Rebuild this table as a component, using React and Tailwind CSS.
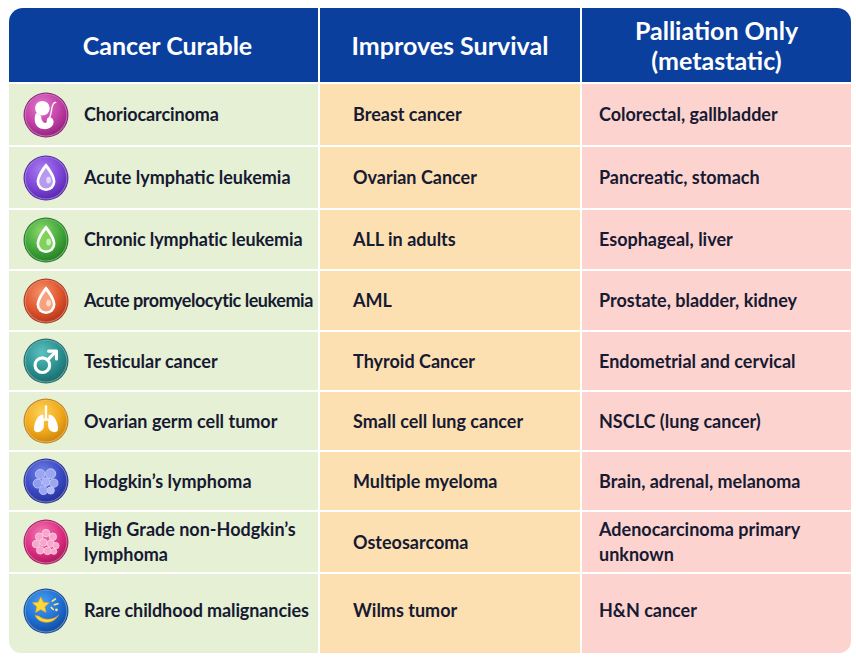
import React from "react";

const FONT = { fontFamily: "Lato, 'Open Sans', sans-serif" };

function Badge({ id, light, mid, dark, children }) {
  return (
    <svg width="46" height="46" viewBox="0 0 44 44" className="shrink-0 w-[46px] h-[46px]">
      <defs>
        <radialGradient id={id} cx="40%" cy="30%" r="75%">
          <stop offset="0%" stopColor={light} />
          <stop offset="60%" stopColor={mid} />
          <stop offset="100%" stopColor={dark} />
        </radialGradient>
      </defs>
      <circle cx="22" cy="22" r="21.5" fill={dark} />
      <circle cx="22" cy="22" r="20" fill={`url(#${id})`} />
      <circle cx="22" cy="22" r="20" fill="none" stroke="#ffffff" strokeOpacity="0.35" strokeWidth="1" />
      {children}
    </svg>
  );
}

function Drop({ inner }) {
  return (
    <g>
      <path d="M22 8 C22 8 13 18.5 13 25.5 A9 9 0 0 0 31 25.5 C31 18.5 22 8 22 8 Z" fill="#ffffff" />
      <path d="M22 12.5 C22 12.5 15.5 20.5 15.5 25.5 A6.5 6.5 0 0 0 28.5 25.5 C28.5 20.5 22 12.5 22 12.5 Z" fill={inner} />
      <ellipse cx="24.5" cy="24" rx="2.3" ry="3.2" fill="#ffffff" opacity="0.6" />
    </g>
  );
}

const icons = [
  <Badge key="1" id="g1" light="#e27ccc" mid="#c23fa6" dark="#8e1f7a">
    <circle cx="18.5" cy="15.5" r="7" fill="#fff" />
    <path d="M12.5 20 C9.5 26 11.5 35 19.5 35.5 C25.5 36 30.5 32 29 27 C28 24 25 23.5 23.5 25 C22 26.5 23.5 28.5 22 29.5 C20 30.5 17 27 17.5 23 Z" fill="#fff" />
    <path d="M24 26 C27.5 24 26.5 17 28.5 12.5 C29.5 10 31 9.5 31.5 10.5" stroke="#fff" strokeWidth="1.3" fill="none" />
  </Badge>,
  <Badge key="2" id="g2" light="#a97ef0" mid="#7d45d8" dark="#5526a8">
    <Drop inner="#b79af0" />
  </Badge>,
  <Badge key="3" id="g3" light="#8fd86c" mid="#42a83a" dark="#237a22">
    <Drop inner="#7fd25a" />
  </Badge>,
  <Badge key="4" id="g4" light="#f5946a" mid="#e0552e" dark="#b0331a">
    <Drop inner="#f7a27d" />
  </Badge>,
  <Badge key="5" id="g5" light="#5cc0c0" mid="#2a9090" dark="#1b6868">
    <circle cx="18.5" cy="26" r="7" stroke="#fff" strokeWidth="3" fill="none" />
    <path d="M23.5 21 L31 13.5" stroke="#fff" strokeWidth="3" strokeLinecap="round" />
    <path d="M24.5 12.5 L32 12.5 L32 20" stroke="#fff" strokeWidth="3" fill="none" strokeLinecap="round" strokeLinejoin="round" />
  </Badge>,
  <Badge key="6" id="g6" light="#fcd25a" mid="#f1a91a" dark="#c8820c">
    <path d="M22 8 L22 21" stroke="#fff" strokeWidth="2.2" strokeLinecap="round" />
    <path d="M22 19 L19 22 M22 19 L25 22" stroke="#fff" strokeWidth="1.7" strokeLinecap="round" />
    <path d="M19.5 16 C14.5 15 10.5 23 10.5 29.5 C10.5 32.5 13 33.5 16.5 32 C18.5 31 20 29.5 20 26 Z" fill="#fff" />
    <path d="M24.5 16 C29.5 15 33.5 23 33.5 29.5 C33.5 32.5 31 33.5 27.5 32 C25.5 31 24 29.5 24 26 Z" fill="#fff" />
  </Badge>,
  <Badge key="7" id="g7" light="#6f80e8" mid="#3b4bc4" dark="#262f94">
    <circle cx="16.5" cy="15.5" r="4.6" fill="#9aa6f2" stroke="#c5ccfa" strokeWidth="0.8" />
    <circle cx="26.5" cy="15" r="4.8" fill="#9aa6f2" stroke="#c5ccfa" strokeWidth="0.8" />
    <circle cx="14" cy="24.5" r="4.3" fill="#8f9cf0" stroke="#c5ccfa" strokeWidth="0.8" />
    <circle cx="22" cy="23" r="4" fill="#a7b1f5" stroke="#c5ccfa" strokeWidth="0.8" />
    <circle cx="29.5" cy="24" r="3.9" fill="#9aa6f2" stroke="#c5ccfa" strokeWidth="0.8" />
    <circle cx="19.5" cy="31" r="4" fill="#9aa6f2" stroke="#c5ccfa" strokeWidth="0.8" />
    <circle cx="26.5" cy="31" r="3.5" fill="#b3bcf7" stroke="#c5ccfa" strokeWidth="0.8" />
  </Badge>,
  <Badge key="8" id="g8" light="#f27ab4" mid="#de2f83" dark="#a8185c">
    <circle cx="22" cy="13.5" r="3.6" fill="#f7a6cc" stroke="#fcd0e4" strokeWidth="0.8" />
    <circle cx="15.5" cy="17" r="3.6" fill="#f7a6cc" stroke="#fcd0e4" strokeWidth="0.8" />
    <circle cx="28.5" cy="17" r="3.6" fill="#f7a6cc" stroke="#fcd0e4" strokeWidth="0.8" />
    <circle cx="12.5" cy="24" r="3.6" fill="#f7a6cc" stroke="#fcd0e4" strokeWidth="0.8" />
    <circle cx="19.5" cy="22.5" r="3.6" fill="#f7a6cc" stroke="#fcd0e4" strokeWidth="0.8" />
    <circle cx="26.5" cy="23.5" r="3.6" fill="#f7a6cc" stroke="#fcd0e4" strokeWidth="0.8" />
    <circle cx="31.5" cy="25.5" r="3" fill="#f7a6cc" stroke="#fcd0e4" strokeWidth="0.8" />
    <circle cx="16.5" cy="30" r="3.6" fill="#f7a6cc" stroke="#fcd0e4" strokeWidth="0.8" />
    <circle cx="23.5" cy="30.5" r="3.6" fill="#f7a6cc" stroke="#fcd0e4" strokeWidth="0.8" />
    <circle cx="29.5" cy="31" r="2.8" fill="#f7a6cc" stroke="#fcd0e4" strokeWidth="0.8" />
  </Badge>,
  <Badge key="9" id="g9" light="#4aa0f0" mid="#1e6fd4" dark="#12489a">
    <path d="M17 8.5 L19.4 13.6 L25 14.2 L20.8 17.9 L22 23.4 L17 20.5 L12 23.4 L13.2 17.9 L9 14.2 L14.6 13.6 Z" fill="#ffd83a" stroke="#f0a818" strokeWidth="0.6" />
    <path d="M11.5 26 C14.5 34 28 36 34 26 C29.5 30.5 20 31.5 15.5 27 Z" fill="#ffd83a" stroke="#e6a010" strokeWidth="0.6" />
    <path d="M28 12.5 L31 10.5 M30 16 L33.5 15 M27 18.5 L29 20.5" stroke="#ffe680" strokeWidth="1.5" strokeLinecap="round" />
    <circle cx="32" cy="21" r="1.3" fill="#ffe680" />
  </Badge>,
];

const rows = [
  ["Choriocarcinoma", "Breast cancer", "Colorectal, gallbladder", "h-[61px]", "tracking-[-0.1px]"],
  ["Acute lymphatic leukemia", "Ovarian Cancer", "Pancreatic, stomach", "h-[61px]", "tracking-[0px]"],
  ["Chronic lymphatic leukemia", "ALL in adults", "Esophageal, liver", "h-[59px]", "tracking-[-0.1px]"],
  ["Acute promyelocytic leukemia", "AML", "Prostate, bladder, kidney", "h-[59px]", "tracking-[-0.45px]"],
  ["Testicular cancer", "Thyroid Cancer", "Endometrial and cervical", "h-[58px]", "tracking-[0px]"],
  ["Ovarian germ cell tumor", "Small cell lung cancer", "NSCLC (lung cancer)", "h-[58px]", "tracking-[0px]"],
  ["Hodgkin\u2019s lymphoma", "Multiple myeloma", "Brain, adrenal, melanoma", "h-[58px]", "tracking-[0px]"],
  ["High Grade non-Hodgkin\u2019s lymphoma", "Osteosarcoma", "Adenocarcinoma primary unknown", "h-[60px]", "w-[215px]"],
  ["Rare childhood malignancies", "Wilms tumor", "H&N cancer", "h-[79px]", "tracking-[-0.1px]"],
];

export default function App() {
  return (
    <div className="w-[856px] h-[663px] bg-white pt-[8px] pl-[9px]" style={FONT}>
      <div className="w-[842px] flex flex-col gap-[2px]">
        <div className="flex gap-[2px] h-[74px] text-white font-bold text-[25px] leading-[30px]">
          <div className="w-[309px] bg-[#0b3f9e] rounded-tl-[14px] flex items-center justify-center pl-[8px]">
            Cancer Curable
          </div>
          <div className="w-[260px] bg-[#0b3f9e] flex items-center justify-center">
            Improves Survival
          </div>
          <div className="w-[269px] bg-[#0b3f9e] rounded-tr-[14px] flex items-center justify-center text-center">
            Palliation Only
            <br />
            (metastatic)
          </div>
        </div>
        {rows.map((r, i) => {
          const last = i === rows.length - 1;
          return (
            <div key={i} className={`flex gap-[2px] ${r[3]} text-[#161a32] font-bold text-[18px] leading-[25px]`}>
              <div className={`w-[309px] bg-[#e6f0d5] flex items-center pl-[14px] gap-[15px] ${last ? "rounded-bl-[12px] pb-[6px]" : ""}`}>
                {icons[i]}
                <span className={i === 7 ? r[4] : `whitespace-nowrap ${r[4]}`}>{r[0]}</span>
              </div>
              <div className={`w-[260px] bg-[#fde0b1] flex items-center pl-[33px] ${last ? "pb-[6px]" : ""}`}>
                {r[1]}
              </div>
              <div className={`w-[269px] bg-[#fdd3d0] flex items-center pl-[17px] ${last ? "rounded-br-[12px] pb-[6px]" : ""}`}>
                <span className={i === 7 ? "w-[215px]" : ""}>{r[2]}</span>
              </div>
            </div>
          );
        })}
      </div>
    </div>
  );
}
